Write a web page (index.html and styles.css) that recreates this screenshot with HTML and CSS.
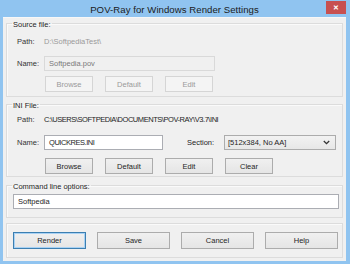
FILE: index.html
```html
<!DOCTYPE html>
<html>
<head>
<meta charset="utf-8">
<link rel="stylesheet" href="styles.css">
</head>
<body>
<div class="window">
  <div class="titlebar">
    <span class="title">POV-Ray for Windows Render Settings</span>
    <span class="close">&#x2715;</span>
  </div>
  <div class="client">
    <fieldset class="group g-source">
      <legend>Source file:</legend>
      <div class="row row-path"><span class="lbl">Path:</span><span class="val dim">D:\SoftpediaTest\</span></div>
      <div class="row row-name"><span class="lbl">Name:</span><span class="field disabled w-src">Softpedia.pov</span></div>
      <div class="btns">
        <span class="btn disabled">Browse</span>
        <span class="btn disabled">Default</span>
        <span class="btn disabled">Edit</span>
      </div>
    </fieldset>
    <fieldset class="group g-ini">
      <legend>INI File:</legend>
      <div class="row row-path"><span class="lbl">Path:</span><span class="val caps">C:\USERS\SOFTPEDIA\DOCUMENTS\POV-RAY\V3.7\INI</span></div>
      <div class="row row-name">
        <span class="lbl">Name:</span><span class="field w-ini caps">QUICKRES.INI</span>
        <span class="sec-lbl">Section:</span>
        <span class="select"><span>[512x384, No AA]</span><svg class="chev" width="7" height="5" viewBox="0 0 7 5"><path d="M0.8 1 L3.5 3.7 L6.2 1" fill="none" stroke="#333" stroke-width="1.3"/></svg></span>
      </div>
      <div class="btns">
        <span class="btn">Browse</span>
        <span class="btn">Default</span>
        <span class="btn">Edit</span>
        <span class="btn">Clear</span>
      </div>
    </fieldset>
    <fieldset class="group g-cmd">
      <legend>Command line options:</legend>
      <span class="field w-cmd">Softpedia</span>
    </fieldset>
    <div class="group g-actions">
      <span class="btn big default">Render</span>
      <span class="btn big">Save</span>
      <span class="btn big">Cancel</span>
      <span class="btn big">Help</span>
    </div>
  </div>
</div>
</body>
</html>
```
FILE: styles.css
```css
html, body {
  margin: 0;
  padding: 0;
}
body {
  font-family: "Liberation Sans", Arial, sans-serif;
  font-size: 7.5px;
  color: #1e1e1e;
}
.window {
  position: relative;
  width: 350px;
  height: 264px;
  box-sizing: border-box;
  background: #90c4f0;
  padding: 0 4px 3px 3px;
  display: flex;
  flex-direction: column;
  overflow: hidden;
}
.titlebar {
  position: relative;
  height: 17px;
  display: flex;
  align-items: center;
  justify-content: center;
}
.title {
  font-size: 9.6px;
  color: #1b1b1b;
  letter-spacing: 0.05px;
  margin-top: 1px;
}
.close {
  position: absolute;
  right: 0;
  top: 1px;
  width: 20px;
  height: 13px;
  background: #c75050;
  color: #fff;
  font-size: 7px;
  font-weight: bold;
  display: flex;
  align-items: center;
  justify-content: center;
}
.client {
  flex: 1;
  background: #f0f0f0;
  border-top: 1px solid #f7f7f7;
  padding: 0 3px 0 3px;
  display: flex;
  flex-direction: column;
}
.group {
  margin: 0;
  border: 1px solid #dcdcdc;
  box-shadow: inset 1px 1px 0 #fafafa;
  padding: 0 0 0 10px;
  min-width: 0;
  box-sizing: border-box;
  flex: none;
}
legend {
  padding: 2px 1px 0 1px;
  margin-left: -5px;
  line-height: 9px;
  color: #1e1e1e;
}
.row {
  display: flex;
  align-items: center;
}
.lbl {
  width: 27px;
  flex: none;
  color: #333;
}
.dim {
  color: #9a9a9a;
}
.val {
  white-space: nowrap;
}
.caps {
  letter-spacing: -0.45px;
}
.field {
  box-sizing: border-box;
  height: 15px;
  background: #fff;
  border: 1px solid #abadb3;
  display: flex;
  align-items: center;
  padding-left: 4px;
}
.field.disabled {
  background: #f0f0f0;
  border-color: #d9d9d9;
  color: #7a7a7a;
}
.w-src { width: 171px; }
.w-ini { width: 119px; }
.w-cmd { width: 326px; margin-left: -4px; }
.sec-lbl {
  margin-left: 24px;
  width: 37px;
}
.select {
  box-sizing: border-box;
  width: 112px;
  height: 15px;
  margin-top: 1px;
  border: 1px solid #acacac;
  background: linear-gradient(#f2f2f2, #e7e7e7);
  display: flex;
  align-items: center;
  justify-content: space-between;
  padding: 0 5px 0 3px;
}
.btns {
  display: flex;
  gap: 12px;
  margin-left: 28px;
}
.btn {
  box-sizing: border-box;
  width: 48px;
  height: 16px;
  border: 1px solid #acacac;
  background: linear-gradient(#f0f0f0, #e5e5e5);
  display: flex;
  align-items: center;
  justify-content: center;
  color: #1e1e1e;
}
.btn.disabled {
  border-color: #d5d5d5;
  background: #f4f4f4;
  color: #9a9a9a;
}
.g-source {
  height: 79px;
}
.g-source .row-path { height: 14px; margin-top: 5px; }
.g-source .row-name { margin-top: 8px; }
.g-source .btns { margin-top: 5px; }

.g-ini {
  margin-top: 2px;
  height: 78px;
}
.g-ini .row-path { height: 14px; margin-top: 2px; }
.g-ini .row-name { margin-top: 8px; }
.g-ini .btns { margin-top: 8px; }

.g-cmd {
  margin-top: 3px;
  height: 38px;
}
.g-cmd .field { margin-top: 3px; }

.g-actions {
  margin-top: 5px;
  height: 35px;
  padding: 0 0 1px 6px;
  display: flex;
  align-items: center;
  gap: 11px;
}
.btn.big {
  width: 73px;
  height: 17px;
}
.btn.default {
  border-color: #3c7fb1;
  box-shadow: inset 0 0 0 1px #a9d2f4;
}
```
